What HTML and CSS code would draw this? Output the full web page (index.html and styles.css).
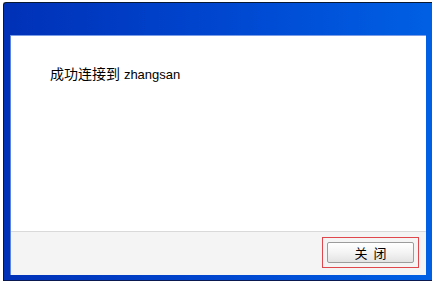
FILE: index.html
```html
<!DOCTYPE html>
<html>
<head>
<meta charset="utf-8">
<link rel="stylesheet" href="styles.css">
</head>
<body>
<div class="window">
  <div class="titlebar"></div>
  <div class="panel">
    <div class="message">
      <span class="cjk">成功连接到</span> <span class="name">zhangsan</span>
    </div>
    <div class="footer">
      <div class="focus-ring">
        <button class="btn">关&nbsp;&nbsp;闭</button>
      </div>
    </div>
  </div>
</div>
</body>
</html>
```
FILE: styles.css
```css
html, body {
  margin: 0;
  padding: 0;
  background: #ffffff;
}
body {
  padding: 2px 0 0 3px;
  font-family: "Liberation Sans", "Noto Sans CJK SC", sans-serif;
}
.window {
  width: 429px;
  height: 279px;
  border-top: 1px solid #0a1830;
  border-left: 1px solid #0a1830;
  border-bottom: 1px solid #0a1a50;
  border-top-left-radius: 3px;
  background: linear-gradient(to right, #0031b7 0%, #0046cf 50%, #0060e4 100%);
  display: flex;
  flex-direction: column;
  padding: 0 6px 5px 6px;
  box-sizing: border-box;
}
.titlebar {
  height: 32px;
  flex: none;
}
.panel {
  flex: 1;
  display: flex;
  flex-direction: column;
  background: #ffffff;
  border-top: 1px solid #7a9be6;
  border-left: 1px solid #5d84dc;
}
.message {
  flex: 1;
  padding: 28px 0 0 39px;
  font-size: 14px;
  color: #000;
  line-height: 18px;
}
.cjk {
  font-family: "Noto Sans CJK SC", sans-serif;
  font-size: 14px;
}
.name {
  font-family: "Liberation Sans", sans-serif;
  font-size: 13px;
}
.footer {
  height: 44px;
  box-sizing: border-box;
  flex: none;
  background: #f4f4f4;
  border-top: 1px solid #d9d9d9;
  display: flex;
  justify-content: flex-end;
  align-items: flex-start;
  padding: 5px 7px 0 0;
}
.focus-ring {
  border: 1px solid #e0474c;
  padding: 4px;
}
.btn {
  display: block;
  width: 87px;
  height: 21px;
  margin: 0;
  padding: 0;
  border: 1px solid #9c9c9c;
  border-radius: 2px;
  background: linear-gradient(to bottom, #ffffff 0%, #f4f4f4 50%, #e3e3e3 100%);
  font-family: "Noto Sans CJK SC", sans-serif;
  font-size: 13px;
  line-height: 19px;
  color: #000;
}
```
